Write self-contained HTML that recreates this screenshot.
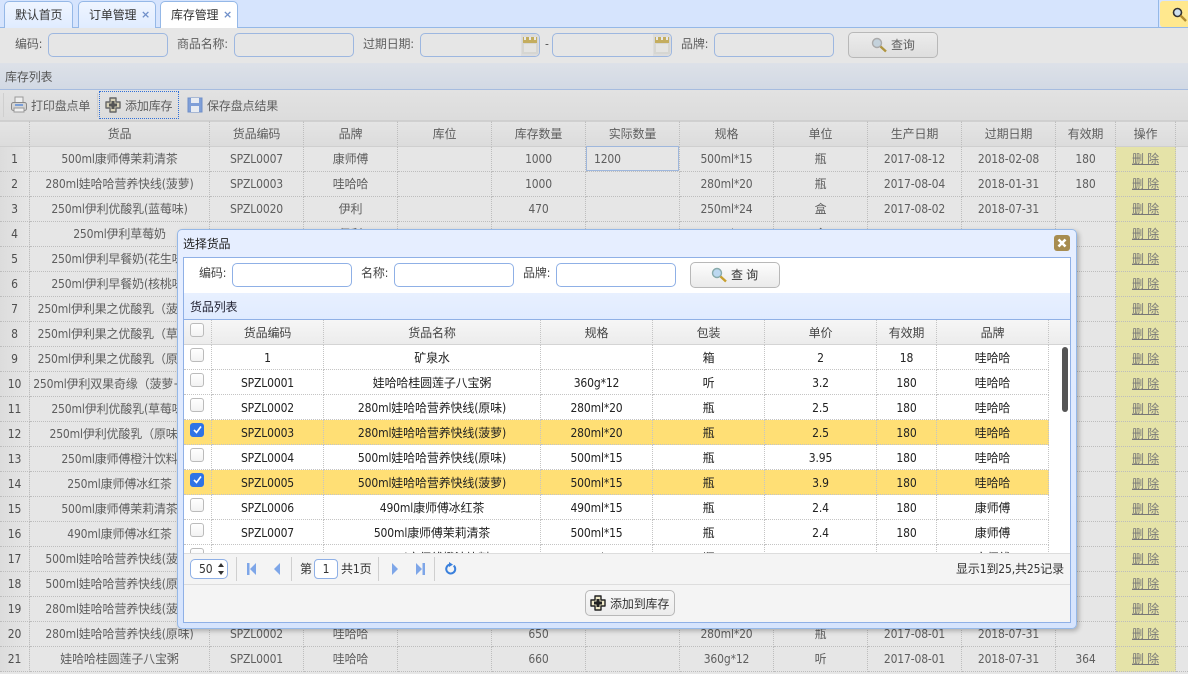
<!DOCTYPE html>
<html><head><meta charset="utf-8"><style>
*{box-sizing:border-box}
html,body{margin:0;padding:0;width:1188px;height:674px;overflow:hidden;background:#e6e6e6}
body{font:12px/16px "DejaVu Sans Condensed","DejaVu Sans","Noto Sans CJK SC",sans-serif;letter-spacing:-.15px;color:#5e5e5e;position:relative}
.a{position:absolute;white-space:nowrap}
.tab{position:absolute;top:1px;height:27px;border:1px solid #95b8e7;border-bottom:0;border-radius:5px 5px 0 0;background:linear-gradient(#eff5ff,#e0ecff);color:#333;line-height:26px;padding-left:10px}
.tab i{position:absolute;top:0;font:bold 11px/26px "DejaVu Sans",sans-serif;color:#6f8fc9}
.in{position:absolute;height:24px;width:120px;border:1px solid #9db7e0;border-radius:5px;background:#e6e6e6;overflow:hidden}
.in.w{background:#fff;border-color:#8fb0e6}
.in b{position:absolute;right:0;top:0;width:18px;height:22px;background:#dcdcdc}
.btn{position:absolute;border:1px solid #b8b8b8;border-radius:5px;background:linear-gradient(#ececec,#dedede);text-align:center}
table{border-collapse:separate;border-spacing:0;table-layout:fixed;position:absolute}
td{height:25px;padding:0;text-align:center;border-right:1px dotted #bdbdbd;border-bottom:1px dotted #bdbdbd;white-space:nowrap;overflow:hidden;vertical-align:middle;line-height:24px}
#m tr:first-child td{background:linear-gradient(#e4e4e4,#dcdcdc);border-bottom:1px solid #cfcfcf;border-top:1px solid #d0d0d0}
#m td:first-child{background:linear-gradient(90deg,#dcdcdc,#e6e6e6);color:#4e4e4e}
#m td:nth-child(13){background:#e5e3a8}
#m tr:first-child td:nth-child(13){background:linear-gradient(#e4e4e4,#dcdcdc)}
#m td:nth-child(14){border-right:0}
#m u{text-decoration:underline;color:#777}
#d td{color:#222;border-color:#c4c4c4;height:25px;padding-top:2px;line-height:22px}
#d tr:first-child td{background:linear-gradient(#f6f6f6,#ececec);color:#444;border-bottom:1px solid #d4d4d4}
#d td:last-child{border:0;background:#fff}
#d tr:first-child td:last-child{background:linear-gradient(#f6f6f6,#ececec);border-bottom:1px solid #d4d4d4}
#d tr.s td{background:#ffdf75}
#d tr.s td:last-child{background:#fff}
.c{position:absolute;left:6px;width:14px;height:14px;border:1px solid #bbb;border-radius:3px;background:linear-gradient(#fff,#f2f2f2)}
.c.k{background:#2f74e6;border-color:#2f74e6}
.sep{position:absolute;width:1px;background:#cfcfcf}
</style></head><body>
<div class="a" style="left:0;top:0;width:1188px;height:28px;background:#d6e4fd;border-bottom:1px solid #95b8e7"></div>
<div class="tab" style="left:4px;width:69px">默认首页</div>
<div class="tab" style="left:78px;width:78px">订单管理<i style="left:62px">×</i></div>
<div class="tab" style="left:160px;width:78px;background:#fff;height:28px;border-bottom:0">库存管理<i style="left:62px">×</i></div>
<div class="a" style="left:1158px;top:0;width:1px;height:27px;background:#95b8e7"></div>
<div class="a" style="left:1160px;top:1px;width:28px;height:26px;background:#ffe88e;border-radius:3px 0 0 3px"></div>
<svg class="a" style="left:1172px;top:7px" width="16" height="16"><circle cx="5.5" cy="5.5" r="4" fill="#cfe0ee" stroke="#333" stroke-width="1.6"/><path d="M8.5 8.5L14 14" stroke="#b08a30" stroke-width="2.4"/></svg>

<div class="a" style="left:0;top:28px;width:1188px;height:35px;background:#e6e6e6"></div>
<div class="a" style="left:15px;top:36px">编码:</div><div class="in" style="left:48px;top:33px"></div>
<div class="a" style="left:177px;top:36px">商品名称:</div><div class="in" style="left:234px;top:33px"></div>
<div class="a" style="left:363px;top:36px">过期日期:</div><div class="in" style="left:420px;top:33px"><b></b></div>
<svg class="a" style="left:521px;top:35px" width="18" height="20"><rect x="1" y="2" width="16" height="17" fill="#d6d6d2"/><rect x="2" y="2" width="14" height="6" fill="#c4ad5e"/><path d="M4 2v3M9 2v3M14 2v3" stroke="#e8e8e8" stroke-width="2"/><rect x="3" y="9" width="12" height="8" fill="#e4e4e2"/></svg>
<div class="a" style="left:545px;top:36px">-</div><div class="in" style="left:552px;top:33px"><b></b></div>
<svg class="a" style="left:653px;top:35px" width="18" height="20"><rect x="1" y="2" width="16" height="17" fill="#d6d6d2"/><rect x="2" y="2" width="14" height="6" fill="#c4ad5e"/><path d="M4 2v3M9 2v3M14 2v3" stroke="#e8e8e8" stroke-width="2"/><rect x="3" y="9" width="12" height="8" fill="#e4e4e2"/></svg>
<div class="a" style="left:681px;top:36px">品牌:</div><div class="in" style="left:714px;top:33px"></div>
<div class="btn" style="left:848px;top:32px;width:90px;height:26px"></div>
<svg class="a" style="left:871px;top:37px" width="16" height="16"><circle cx="6" cy="6" r="4.5" fill="#c4d2dc" stroke="#aaa" stroke-width="1.4"/><path d="M9.5 9.5L15 14.5" stroke="#b09540" stroke-width="2.4"/></svg>
<div class="a" style="left:891px;top:37px">查询</div>

<div class="a" style="left:0;top:63px;width:1188px;height:27px;background:linear-gradient(#dde1e8,#d2d9e4);border-bottom:1px solid #a6bcdf;padding-left:5px;line-height:27px;padding-top:1px;color:#555">库存列表</div>
<div class="a" style="left:0;top:90px;width:1188px;height:31px;background:linear-gradient(#e2e2e2,#dcdcdc);border-bottom:1px solid #cfcfcf"></div>
<div class="sep" style="left:3px;top:93px;height:24px"></div><div class="sep" style="left:97px;top:93px;height:24px"></div>
<svg class="a" style="left:10px;top:96px" width="18" height="18"><rect x="5" y="1" width="8" height="6" fill="#eee" stroke="#999"/><rect x="1.5" y="6.5" width="15" height="8" rx="2" fill="#d4d4d4" stroke="#888"/><rect x="5" y="8" width="8" height="2" fill="#7a9fd8"/><rect x="4" y="12" width="10" height="4" fill="#f0f0f0" stroke="#999"/></svg>
<div class="a" style="left:31px;top:98px">打印盘点单</div>
<div class="a" style="left:99px;top:91px;width:80px;height:28px;border:1px dotted #2f6fd8"></div>
<svg class="a" style="left:105px;top:97px" width="16" height="16"><path d="M5 1h6v4h4v6h-4v4H5v-4H1V5h4z" fill="#d8d2b8" stroke="#666" stroke-width="1.400" stroke-linejoin="round"/><path d="M8 4v8M4 8h8" stroke="#555" stroke-width="3"/></svg>
<div class="a" style="left:125px;top:98px">添加库存</div>
<svg class="a" style="left:187px;top:97px" width="16" height="16"><rect x="1" y="1" width="14" height="14" fill="#7f9fd8" stroke="#6f8fc8"/><rect x="4" y="1" width="8" height="5" fill="#e8ecf2"/><rect x="4" y="9" width="8" height="6" fill="#e8ecf2"/></svg>
<div class="a" style="left:207px;top:98px">保存盘点结果</div>

<table id="m" style="left:0;top:121px;width:1188px">
<colgroup><col style="width:30px"><col style="width:180px"><col style="width:94px"><col style="width:94px"><col style="width:94px"><col style="width:94px"><col style="width:94px"><col style="width:94px"><col style="width:94px"><col style="width:94px"><col style="width:94px"><col style="width:60px"><col style="width:60px"><col style="width:12px"></colgroup>
<tr><td></td><td>货品</td><td>货品编码</td><td>品牌</td><td>库位</td><td>库存数量</td><td>实际数量</td><td>规格</td><td>单位</td><td>生产日期</td><td>过期日期</td><td>有效期</td><td>操作</td><td></td></tr>
<tr><td>1</td><td>500ml康师傅茉莉清茶</td><td>SPZL0007</td><td>康师傅</td><td></td><td>1000</td><td></td><td>500ml*15</td><td>瓶</td><td>2017-08-12</td><td>2018-02-08</td><td>180</td><td><u>删 除</u></td><td></td></tr>
<tr><td>2</td><td>280ml娃哈哈营养快线(菠萝)</td><td>SPZL0003</td><td>哇哈哈</td><td></td><td>1000</td><td></td><td>280ml*20</td><td>瓶</td><td>2017-08-04</td><td>2018-01-31</td><td>180</td><td><u>删 除</u></td><td></td></tr>
<tr><td>3</td><td>250ml伊利优酸乳(蓝莓味)</td><td>SPZL0020</td><td>伊利</td><td></td><td>470</td><td></td><td>250ml*24</td><td>盒</td><td>2017-08-02</td><td>2018-07-31</td><td></td><td><u>删 除</u></td><td></td></tr>
<tr><td>4</td><td>250ml伊利草莓奶</td><td>SPZL0021</td><td>伊利</td><td></td><td>470</td><td></td><td>250ml*24</td><td>盒</td><td>2017-08-02</td><td>2018-07-31</td><td></td><td><u>删 除</u></td><td></td></tr>
<tr><td>5</td><td>250ml伊利早餐奶(花生味)</td><td></td><td></td><td></td><td></td><td></td><td></td><td></td><td></td><td></td><td></td><td><u>删 除</u></td><td></td></tr>
<tr><td>6</td><td>250ml伊利早餐奶(核桃味)</td><td></td><td></td><td></td><td></td><td></td><td></td><td></td><td></td><td></td><td></td><td><u>删 除</u></td><td></td></tr>
<tr><td>7</td><td>250ml伊利果之优酸乳（菠萝）</td><td></td><td></td><td></td><td></td><td></td><td></td><td></td><td></td><td></td><td></td><td><u>删 除</u></td><td></td></tr>
<tr><td>8</td><td>250ml伊利果之优酸乳（草莓）</td><td></td><td></td><td></td><td></td><td></td><td></td><td></td><td></td><td></td><td></td><td><u>删 除</u></td><td></td></tr>
<tr><td>9</td><td>250ml伊利果之优酸乳（原味）</td><td></td><td></td><td></td><td></td><td></td><td></td><td></td><td></td><td></td><td></td><td><u>删 除</u></td><td></td></tr>
<tr><td>10</td><td>250ml伊利双果奇缘（菠萝+桃）</td><td></td><td></td><td></td><td></td><td></td><td></td><td></td><td></td><td></td><td></td><td><u>删 除</u></td><td></td></tr>
<tr><td>11</td><td>250ml伊利优酸乳(草莓味)</td><td></td><td></td><td></td><td></td><td></td><td></td><td></td><td></td><td></td><td></td><td><u>删 除</u></td><td></td></tr>
<tr><td>12</td><td>250ml伊利优酸乳（原味）</td><td></td><td></td><td></td><td></td><td></td><td></td><td></td><td></td><td></td><td></td><td><u>删 除</u></td><td></td></tr>
<tr><td>13</td><td>250ml康师傅橙汁饮料</td><td></td><td></td><td></td><td></td><td></td><td></td><td></td><td></td><td></td><td></td><td><u>删 除</u></td><td></td></tr>
<tr><td>14</td><td>250ml康师傅冰红茶</td><td></td><td></td><td></td><td></td><td></td><td></td><td></td><td></td><td></td><td></td><td><u>删 除</u></td><td></td></tr>
<tr><td>15</td><td>500ml康师傅茉莉清茶</td><td></td><td></td><td></td><td></td><td></td><td></td><td></td><td></td><td></td><td></td><td><u>删 除</u></td><td></td></tr>
<tr><td>16</td><td>490ml康师傅冰红茶</td><td></td><td></td><td></td><td></td><td></td><td></td><td></td><td></td><td></td><td></td><td><u>删 除</u></td><td></td></tr>
<tr><td>17</td><td>500ml娃哈哈营养快线(菠萝)</td><td></td><td></td><td></td><td></td><td></td><td></td><td></td><td></td><td></td><td></td><td><u>删 除</u></td><td></td></tr>
<tr><td>18</td><td>500ml娃哈哈营养快线(原味)</td><td></td><td></td><td></td><td></td><td></td><td></td><td></td><td></td><td></td><td></td><td><u>删 除</u></td><td></td></tr>
<tr><td>19</td><td>280ml娃哈哈营养快线(菠萝)</td><td></td><td></td><td></td><td></td><td></td><td></td><td></td><td></td><td></td><td></td><td><u>删 除</u></td><td></td></tr>
<tr><td>20</td><td>280ml娃哈哈营养快线(原味)</td><td>SPZL0002</td><td>哇哈哈</td><td></td><td>650</td><td></td><td>280ml*20</td><td>瓶</td><td>2017-08-01</td><td>2018-07-31</td><td></td><td><u>删 除</u></td><td></td></tr>
<tr><td>21</td><td>娃哈哈桂圆莲子八宝粥</td><td>SPZL0001</td><td>哇哈哈</td><td></td><td>660</td><td></td><td>360g*12</td><td>听</td><td>2017-08-01</td><td>2018-07-31</td><td>364</td><td><u>删 除</u></td><td></td></tr>
</table>
<div class="a" style="left:586px;top:146px;width:93px;height:25px;border:1px solid #9fb7dc;background:#e6e6e6;padding-left:7px;line-height:24px">1200</div>

<!-- modal -->
<div class="a" style="left:177px;top:229px;width:900px;height:400px;border:1px solid #95b8e7;border-radius:5px;background:linear-gradient(#e6eeff 0,#e6eeff 30px,#d6e4fd 100%);box-shadow:2px 2px 5px rgba(0,0,0,.25)"></div>
<div class="a" style="left:183px;top:236px;color:#222">选择货品</div>
<svg class="a" style="left:1054px;top:235px" width="16" height="16"><rect width="16" height="16" rx="3" fill="#a78c50"/><path d="M4.5 4.5l7 7M11.500 4.500l-7 7" stroke="#fff" stroke-width="2.600"/></svg>
<div class="a" style="left:183px;top:257px;width:888px;height:366px;border:1px solid #8fb0e6;background:#fff"></div>
<div class="a" style="left:199px;top:265px;color:#444">编码:</div><div class="in w" style="left:232px;top:263px"></div>
<div class="a" style="left:361px;top:265px;color:#444">名称:</div><div class="in w" style="left:394px;top:263px"></div>
<div class="a" style="left:523px;top:265px;color:#444">品牌:</div><div class="in w" style="left:556px;top:263px"></div>
<div class="btn" style="left:690px;top:262px;width:90px;height:26px;background:linear-gradient(#fdfdfd,#eaeaea)"></div>
<svg class="a" style="left:711px;top:267px" width="16" height="16"><circle cx="6" cy="6" r="4.500" fill="#bcd8f0" stroke="#8aa" stroke-width="1.400"/><path d="M9.500 9.500L15 14.500" stroke="#c8a030" stroke-width="2.400"/></svg>
<div class="a" style="left:731px;top:267px;color:#333">查 询</div>
<div class="a" style="left:184px;top:293px;width:886px;height:27px;background:linear-gradient(#e8f0ff,#e0ebff);border-bottom:1px solid #8fb0e6;padding-left:6px;padding-top:1px;line-height:26px;color:#223">货品列表</div>

<div class="a" style="left:184px;top:320px;width:886px;height:233px;overflow:hidden;background:#fff">
<table id="d" style="left:0;top:0;width:886px">
<colgroup><col style="width:28px"><col style="width:112px"><col style="width:217px"><col style="width:112px"><col style="width:112px"><col style="width:112px"><col style="width:60px"><col style="width:112px"><col style="width:21px"></colgroup>
<tr><td></td><td>货品编码</td><td>货品名称</td><td>规格</td><td>包装</td><td>单价</td><td>有效期</td><td>品牌</td><td></td></tr>
<tr><td></td><td>1</td><td>矿泉水</td><td></td><td>箱</td><td>2</td><td>18</td><td>哇哈哈</td><td></td></tr>
<tr><td></td><td>SPZL0001</td><td>娃哈哈桂圆莲子八宝粥</td><td>360g*12</td><td>听</td><td>3.2</td><td>180</td><td>哇哈哈</td><td></td></tr>
<tr><td></td><td>SPZL0002</td><td>280ml娃哈哈营养快线(原味)</td><td>280ml*20</td><td>瓶</td><td>2.5</td><td>180</td><td>哇哈哈</td><td></td></tr>
<tr class="s"><td></td><td>SPZL0003</td><td>280ml娃哈哈营养快线(菠萝)</td><td>280ml*20</td><td>瓶</td><td>2.5</td><td>180</td><td>哇哈哈</td><td></td></tr>
<tr><td></td><td>SPZL0004</td><td>500ml娃哈哈营养快线(原味)</td><td>500ml*15</td><td>瓶</td><td>3.95</td><td>180</td><td>哇哈哈</td><td></td></tr>
<tr class="s"><td></td><td>SPZL0005</td><td>500ml娃哈哈营养快线(菠萝)</td><td>500ml*15</td><td>瓶</td><td>3.9</td><td>180</td><td>哇哈哈</td><td></td></tr>
<tr><td></td><td>SPZL0006</td><td>490ml康师傅冰红茶</td><td>490ml*15</td><td>瓶</td><td>2.4</td><td>180</td><td>康师傅</td><td></td></tr>
<tr><td></td><td>SPZL0007</td><td>500ml康师傅茉莉清茶</td><td>500ml*15</td><td>瓶</td><td>2.4</td><td>180</td><td>康师傅</td><td></td></tr>
<tr><td></td><td>SPZL0008</td><td>250ml康师傅橙汁饮料</td><td>250ml*24</td><td>瓶</td><td>2.4</td><td>180</td><td>康师傅</td><td></td></tr>
</table>
<div class="c" style="top:3px"></div><div class="c" style="top:28px"></div><div class="c" style="top:53px"></div><div class="c" style="top:78px"></div>
<div class="c k" style="top:103px"><svg style="position:absolute;left:1px;top:0" width="11" height="11"><path d="M2 6l2.500 2.500L9 2.500" fill="none" stroke="#fff" stroke-width="1.600"/></svg></div>
<div class="c" style="top:128px"></div>
<div class="c k" style="top:153px"><svg style="position:absolute;left:1px;top:0" width="11" height="11"><path d="M2 6l2.500 2.500L9 2.500" fill="none" stroke="#fff" stroke-width="1.600"/></svg></div>
<div class="c" style="top:178px"></div><div class="c" style="top:203px"></div><div class="c" style="top:228px"></div>
<div class="a" style="left:878px;top:27px;width:6px;height:65px;background:#555;border-radius:3px"></div>
</div>

<div class="a" style="left:184px;top:553px;width:886px;height:69px;background:#f4f4f4;border-top:1px solid #ddd"></div>
<div class="a" style="left:184px;top:584px;width:886px;height:1px;background:#ddd"></div>
<div class="a" style="left:190px;top:559px;width:38px;height:20px;border:1px solid #8fb0e6;border-radius:5px;background:#fff;padding-left:8px;line-height:18px;color:#333">50</div>
<svg class="a" style="left:217px;top:562px" width="8" height="14"><path d="M4 1l3 4H1zM4 13l3-4H1z" fill="#333"/></svg>
<div class="sep" style="left:236px;top:557px;height:24px"></div>
<svg class="a" style="left:246px;top:562px" width="11" height="14"><path d="M1 1h2.500v12H1zM10 1v12L4 7z" fill="#7ea6e8"/></svg>
<svg class="a" style="left:273px;top:562px" width="8" height="14"><path d="M7 1v12L1 7z" fill="#7ea6e8"/></svg>
<div class="sep" style="left:291px;top:557px;height:24px"></div>
<div class="a" style="left:300px;top:561px;color:#333">第</div>
<div class="a" style="left:314px;top:559px;width:24px;height:20px;border:1px solid #8fb0e6;border-radius:4px;background:#fff;text-align:center;line-height:18px;color:#333">1</div>
<div class="a" style="left:341px;top:561px;color:#333">共1页</div>
<div class="sep" style="left:378px;top:557px;height:24px"></div>
<svg class="a" style="left:391px;top:562px" width="8" height="14"><path d="M1 1v12l6-6z" fill="#7ea6e8"/></svg>
<svg class="a" style="left:415px;top:562px" width="11" height="14"><path d="M10 1H7.500v12H10zM1 1v12l6-6z" fill="#7ea6e8"/></svg>
<div class="sep" style="left:434px;top:557px;height:24px"></div>
<svg class="a" style="left:444px;top:562px" width="13" height="14"><path d="M9.700 3.600a4.500 4.500 0 1 1-4-1" fill="none" stroke="#3a80dc" stroke-width="2"/><path d="M5 0l4 2.600-4 2.400z" fill="#3a80dc"/></svg>
<div class="a" style="right:124px;top:561px;color:#333">显示1到25,共25记录</div>
<div class="btn" style="left:585px;top:590px;width:90px;height:26px;background:linear-gradient(#f8f8f8,#ececec)"></div>
<svg class="a" style="left:590px;top:595px" width="16" height="16"><path d="M5 1h6v4h4v6h-4v4H5v-4H1V5h4z" fill="#efe9c8" stroke="#222" stroke-width="1.400" stroke-linejoin="round"/><path d="M8 4v8M4 8h8" stroke="#222" stroke-width="3"/></svg>
<div class="a" style="left:610px;top:596px;color:#333">添加到库存</div>
</body></html>
